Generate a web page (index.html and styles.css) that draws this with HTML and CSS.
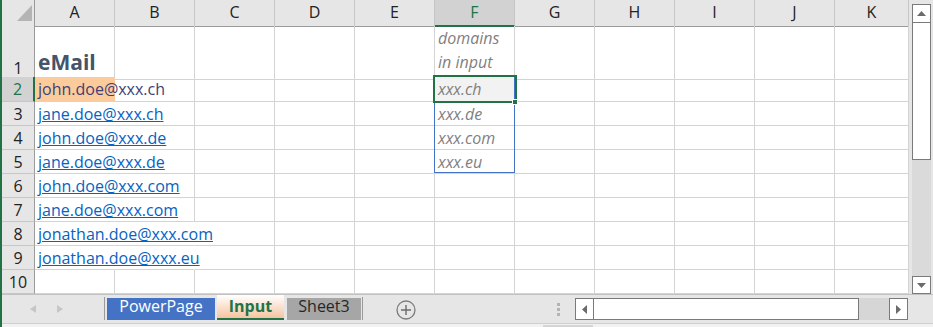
FILE: index.html
```html
<!DOCTYPE html>
<html lang="en">
<head>
  <meta charset="UTF-8">
  <meta name="viewport" content="width=device-width, initial-scale=1.0">
  <title>Input - Excel</title>
  <link rel="stylesheet" href="styles.css">
</head>
<body>
  <div class="app">
    <div class="main">
      <div class="sheet">
        <div class="row head">
          <div class="corner">
            <svg width="32" height="25" viewBox="0 0 32 25"><polygon points="15,21 30,5 30,21" fill="#b4b4b4"/></svg>
          </div>
          <div class="ch">A</div>
          <div class="ch">B</div>
          <div class="ch">C</div>
          <div class="ch">D</div>
          <div class="ch">E</div>
          <div class="ch active">F</div>
          <div class="ch">G</div>
          <div class="ch">H</div>
          <div class="ch">I</div>
          <div class="ch">J</div>
          <div class="ch">K</div>
        </div>

        <div class="row r1">
          <div class="rh">1</div>
          <div class="c title">eMail</div>
          <div class="c"></div>
          <div class="c"></div>
          <div class="c"></div>
          <div class="c"></div>
          <div class="c note wrap">domains<br>in input</div>
          <div class="c"></div>
          <div class="c"></div>
          <div class="c"></div>
          <div class="c"></div>
          <div class="c"></div>
        </div>

        <div class="row r2">
          <div class="rh active">2</div>
          <div class="c input spill">john.doe@xxx.ch</div>
          <div class="c"></div>
          <div class="c"></div>
          <div class="c"></div>
          <div class="c"></div>
          <div class="c note selected">
            xxx.ch
            <span class="range"></span>
            <span class="cursor"></span>
            <span class="handle"></span>
          </div>
          <div class="c"></div>
          <div class="c"></div>
          <div class="c"></div>
          <div class="c"></div>
          <div class="c"></div>
        </div>

        <div class="row">
          <div class="rh">3</div>
          <div class="c spill"><a class="link">jane.doe@xxx.ch</a></div>
          <div class="c"></div>
          <div class="c"></div>
          <div class="c"></div>
          <div class="c"></div>
          <div class="c note">xxx.de</div>
          <div class="c"></div>
          <div class="c"></div>
          <div class="c"></div>
          <div class="c"></div>
          <div class="c"></div>
        </div>

        <div class="row">
          <div class="rh">4</div>
          <div class="c spill"><a class="link">john.doe@xxx.de</a></div>
          <div class="c"></div>
          <div class="c"></div>
          <div class="c"></div>
          <div class="c"></div>
          <div class="c note">xxx.com</div>
          <div class="c"></div>
          <div class="c"></div>
          <div class="c"></div>
          <div class="c"></div>
          <div class="c"></div>
        </div>

        <div class="row">
          <div class="rh">5</div>
          <div class="c spill"><a class="link">jane.doe@xxx.de</a></div>
          <div class="c"></div>
          <div class="c"></div>
          <div class="c"></div>
          <div class="c"></div>
          <div class="c note">xxx.eu</div>
          <div class="c"></div>
          <div class="c"></div>
          <div class="c"></div>
          <div class="c"></div>
          <div class="c"></div>
        </div>

        <div class="row">
          <div class="rh">6</div>
          <div class="c spill"><a class="link">john.doe@xxx.com</a></div>
          <div class="c"></div>
          <div class="c"></div>
          <div class="c"></div>
          <div class="c"></div>
          <div class="c"></div>
          <div class="c"></div>
          <div class="c"></div>
          <div class="c"></div>
          <div class="c"></div>
          <div class="c"></div>
        </div>

        <div class="row">
          <div class="rh">7</div>
          <div class="c spill"><a class="link">jane.doe@xxx.com</a></div>
          <div class="c"></div>
          <div class="c"></div>
          <div class="c"></div>
          <div class="c"></div>
          <div class="c"></div>
          <div class="c"></div>
          <div class="c"></div>
          <div class="c"></div>
          <div class="c"></div>
          <div class="c"></div>
        </div>

        <div class="row">
          <div class="rh">8</div>
          <div class="c spill"><a class="link">jonathan.doe@xxx.com</a></div>
          <div class="c spill"></div>
          <div class="c"></div>
          <div class="c"></div>
          <div class="c"></div>
          <div class="c"></div>
          <div class="c"></div>
          <div class="c"></div>
          <div class="c"></div>
          <div class="c"></div>
          <div class="c"></div>
        </div>

        <div class="row">
          <div class="rh">9</div>
          <div class="c spill"><a class="link">jonathan.doe@xxx.eu</a></div>
          <div class="c spill"></div>
          <div class="c"></div>
          <div class="c"></div>
          <div class="c"></div>
          <div class="c"></div>
          <div class="c"></div>
          <div class="c"></div>
          <div class="c"></div>
          <div class="c"></div>
          <div class="c"></div>
        </div>

        <div class="row">
          <div class="rh">10</div>
          <div class="c"></div>
          <div class="c"></div>
          <div class="c"></div>
          <div class="c"></div>
          <div class="c"></div>
          <div class="c"></div>
          <div class="c"></div>
          <div class="c"></div>
          <div class="c"></div>
          <div class="c"></div>
          <div class="c"></div>
        </div>
      </div>

      <div class="vscroll">
        <div class="sbtn vbtn top">
          <svg width="9" height="5" viewBox="0 0 9 5"><polygon points="0,5 4.5,0 9,5" fill="#6b6b6b"/></svg>
        </div>
        <div class="vthumb"></div>
        <div class="vtrack"></div>
        <div class="sbtn vbtn bottom">
          <svg width="9" height="5" viewBox="0 0 9 5"><polygon points="0,0 9,0 4.5,5" fill="#6b6b6b"/></svg>
        </div>
      </div>
    </div>

    <div class="tabbar">
      <div class="nav">
        <svg width="6" height="8" viewBox="0 0 6 8"><polygon points="6,0 6,8 0,4" fill="#c6c6c6"/></svg>
        <svg width="6" height="8" viewBox="0 0 6 8"><polygon points="0,0 0,8 6,4" fill="#c6c6c6"/></svg>
      </div>
      <div class="sep"></div>
      <div class="tab power">PowerPage</div>
      <div class="tab current">Input</div>
      <div class="tab grey">Sheet3</div>
      <div class="sep after"></div>
      <div class="add">
        <svg width="20" height="20" viewBox="0 0 20 20">
          <circle cx="10" cy="10" r="9" fill="none" stroke="#7b7b7b" stroke-width="1.3"/>
          <path d="M10 5v10M5 10h10" stroke="#6b6b6b" stroke-width="1.4"/>
        </svg>
      </div>
      <div class="dots"><span></span><span></span><span></span></div>
      <div class="sbtn hbtn left">
        <svg width="5" height="9" viewBox="0 0 5 9"><polygon points="5,0 5,9 0,4.5" fill="#6b6b6b"/></svg>
      </div>
      <div class="hthumb"></div>
      <div class="htrack"></div>
      <div class="sbtn hbtn">
        <svg width="5" height="9" viewBox="0 0 5 9"><polygon points="0,0 0,9 5,4.5" fill="#6b6b6b"/></svg>
      </div>
    </div>
    <div class="status"><div class="status-bar"></div></div>
  </div>
</body>
</html>
```

FILE: styles.css
```css
body {
  margin: 0;
  font-family: "Open Sans", "Noto Sans", sans-serif;
  color: #222;
}

.app {
  width: 933px;
  height: 327px;
  box-sizing: border-box;
  border-left: 2px solid #217346;
  background-color: #e6e6e6;
  display: flex;
  flex-direction: column;
  overflow: hidden;
}

.main {
  display: flex;
  height: 294px;
}

.sheet {
  width: 907px;
  background-color: #fff;
}

.row {
  display: grid;
  grid-template-columns: 33px repeat(10, 80px) 74px;
  height: 24px;
}

.row.head {
  height: 26px;
  background-color: #e6e6e6;
}

.row.r1 {
  height: 51px;
}

.row.r2 {
  height: 25px;
}

/* headers */
.corner {
  box-sizing: border-box;
  border-right: 1px solid #9b9b9b;
  border-bottom: 1px solid #9b9b9b;
}

.corner svg {
  display: block;
}

.ch {
  box-sizing: border-box;
  border-right: 1px solid #c6c6c6;
  border-bottom: 1px solid #9b9b9b;
  text-align: center;
  font-size: 16px;
  line-height: 25px;
}

.ch.active {
  background-color: #d2d2d2;
  color: #217346;
  border-bottom: 2px solid #217346;
}

.rh {
  box-sizing: border-box;
  background-color: #e6e6e6;
  border-right: 1px solid #9b9b9b;
  border-bottom: 1px solid #c6c6c6;
  display: flex;
  align-items: flex-end;
  justify-content: center;
  font-size: 16px;
  line-height: 21px;
}

.r2 .rh {
  padding-bottom: 1px;
}

.rh.active {
  background-color: #d2d2d2;
  color: #217346;
  border-right: 2px solid #217346;
}

/* cells */
.c {
  box-sizing: border-box;
  border-right: 1px solid #d4d4d4;
  border-bottom: 1px solid #d4d4d4;
  display: flex;
  align-items: flex-end;
  padding: 0 0 0 3px;
  white-space: nowrap;
  font-size: 16px;
  line-height: 21px;
}

.r2 .c {
  padding-bottom: 1px;
}

.c.spill {
  border-right-color: transparent;
}

.c.title {
  font-size: 21px;
  font-weight: bold;
  line-height: 28px;
  color: #44546a;
  border-bottom: 2px solid #4472c4;
  padding-bottom: 2px;
}

.c.note {
  font-style: italic;
  color: #7f7f7f;
}

.c.wrap {
  white-space: normal;
  line-height: 24px;
  padding-bottom: 5px;
}

.c.input {
  background-color: #fccb9c;
  color: #3f3f76;
}

.link {
  color: #0563c1;
  text-decoration: underline;
}

.c.selected {
  position: relative;
  background-color: #f2f2f2;
}

.range {
  position: absolute;
  left: -1px;
  top: -1px;
  width: 81px;
  height: 97px;
  box-sizing: border-box;
  border: 1px solid #4472c4;
}

.cursor {
  position: absolute;
  left: -2px;
  top: -2px;
  width: 84px;
  height: 28px;
  box-sizing: border-box;
  border: 2px solid #217346;
}

.handle {
  position: absolute;
  left: 77px;
  top: 22px;
  width: 6px;
  height: 6px;
  box-sizing: border-box;
  background-color: #217346;
  border: 1px solid #fff;
}

/* vertical scrollbar */
.vscroll {
  width: 24px;
  display: flex;
  flex-direction: column;
  padding-left: 3px;
  box-sizing: border-box;
}

.sbtn {
  box-sizing: border-box;
  background-color: #fff;
  border: 1px solid #7a7a7a;
  display: flex;
  align-items: center;
  justify-content: center;
}

.vbtn {
  width: 19px;
}

.vbtn.top {
  margin-top: 4px;
  height: 19px;
}

.vbtn.bottom {
  height: 18px;
}

.vthumb {
  width: 19px;
  height: 137px;
  box-sizing: border-box;
  background-color: #fff;
  border: 1px solid #7a7a7a;
  border-top: none;
}

.vtrack {
  width: 19px;
  flex: 1;
  background-color: #dadada;
}

/* sheet tabs */
.tabbar {
  height: 29px;
  box-sizing: border-box;
  border-top: 1px solid #c2c2c2;
  display: flex;
  align-items: flex-start;
}

.nav {
  width: 100px;
  height: 28px;
  display: flex;
  align-items: center;
  padding-left: 28px;
  box-sizing: border-box;
  gap: 21px;
}

.nav svg {
  display: block;
}

.sep {
  width: 1px;
  height: 23px;
  margin-top: 2px;
  margin-left: 2px;
  background-color: #9b9b9b;
}

.tab {
  height: 22px;
  margin-top: 3px;
  box-sizing: border-box;
  font-size: 16px;
  line-height: 16px;
  text-align: center;
  white-space: nowrap;
}

.tab.power {
  width: 108px;
  margin-left: 2px;
  background-color: #4472c4;
  color: #fff;
}

.tab.current {
  width: 67px;
  height: 25px;
  margin-top: 0;
  margin-left: 2px;
  padding-top: 3px;
  background: linear-gradient(#fff, #f6c4a1);
  border-bottom: 2px solid #217346;
  color: #217346;
  font-weight: bold;
}

.tab.grey {
  width: 74px;
  margin-left: 3px;
  background-color: #a6a6a6;
  color: #262626;
}

.sep.after {
  margin-left: 1px;
}

.add {
  margin-left: 33px;
  margin-top: 5px;
  width: 20px;
  height: 20px;
}

.add svg {
  display: block;
}

.dots {
  margin-left: 141px;
  margin-top: 8px;
  width: 3px;
  display: flex;
  flex-direction: column;
  gap: 2px;
}

.dots span {
  width: 3px;
  height: 3px;
  background-color: #b4b4b4;
}

.hbtn {
  width: 19px;
  height: 22px;
  margin-top: 3px;
}

.hbtn.left {
  margin-left: 15px;
}

.hthumb {
  width: 265px;
  height: 22px;
  margin-top: 3px;
  box-sizing: border-box;
  background-color: #fff;
  border: 1px solid #7a7a7a;
  border-left: none;
}

.htrack {
  width: 30px;
  height: 22px;
  margin-top: 3px;
  background-color: #d6d6d6;
}

.status {
  flex: 1;
  border-top: 1px solid #cfcfcf;
  background-color: #f2f2f2;
  display: flex;
  align-items: flex-end;
}

.status-bar {
  margin-left: 541px;
  width: 50px;
  height: 2px;
  background-color: #d4d4d4;
}
```
